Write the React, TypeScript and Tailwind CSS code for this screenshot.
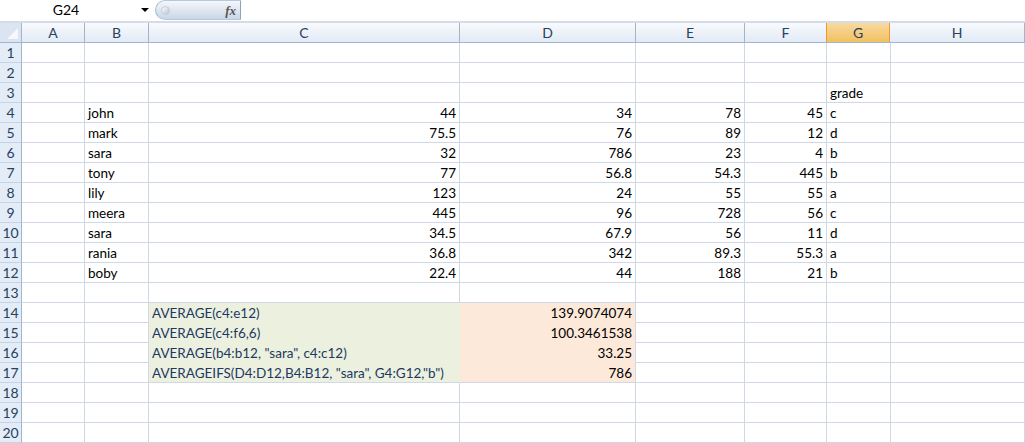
import React from 'react';

// column widths in px: row header, A..H
const COLS = [
  { key: '', w: 'w-[22px]' },
  { key: 'A', w: 'w-[63px]' },
  { key: 'B', w: 'w-[64px]' },
  { key: 'C', w: 'w-[311px]' },
  { key: 'D', w: 'w-[176px]' },
  { key: 'E', w: 'w-[109px]' },
  { key: 'F', w: 'w-[82px]' },
  { key: 'G', w: 'w-[64px]' },
  { key: 'H', w: 'flex-1' },
];

type Cell = string | number | undefined;

// A..H values per row, 1-indexed rows
const DATA: Record<number, Cell[]> = {
  3: [, , , , , , 'grade'],
  4: [, 'john', 44, 34, 78, 45, 'c'],
  5: [, 'mark', 75.5, 76, 89, 12, 'd'],
  6: [, 'sara', 32, 786, 23, 4, 'b'],
  7: [, 'tony', 77, 56.8, 54.3, 445, 'b'],
  8: [, 'lily', 123, 24, 55, 55, 'a'],
  9: [, 'meera', 445, 96, 728, 56, 'c'],
  10: [, 'sara', 34.5, 67.9, 56, 11, 'd'],
  11: [, 'rania', 36.8, 342, 89.3, 55.3, 'a'],
  12: [, 'boby', 22.4, 44, 188, 21, 'b'],
  14: [, , 'AVERAGE(c4:e12)', '139.9074074'],
  15: [, , 'AVERAGE(c4:f6,6)', '100.3461538'],
  16: [, , 'AVERAGE(b4:b12, "sara", c4:c12)', '33.25'],
  17: [, , 'AVERAGEIFS(D4:D12,B4:B12, "sara", G4:G12,"b")', '786'],
};

const isNum = (v: Cell) => typeof v === 'number' || (typeof v === 'string' && /^[\d.]+$/.test(v));

const TopBar = () => (
  <div className="flex h-[23px] bg-white border-b-2 border-[#d5dce6]">
    <div className="w-[152px] relative flex items-center">
      <span className="w-[132px] text-center text-[14px] text-black pb-[2px]">G24</span>
      <span className="absolute left-[141px] top-[8px] w-0 h-0 border-l-[4px] border-r-[4px] border-t-[4px] border-l-transparent border-r-transparent border-t-black" />
    </div>
    <div className="w-[86px] h-[20px] ml-[3px] rounded-l-full border border-l-[#a8b9cf] border-y-[#b7c6d9] border-r-[#8ea2bd] bg-gradient-to-b from-[#f4f7fb] via-[#dfe7f2] to-[#c9d6e8] flex items-center justify-between pl-[5px] pr-[4px]">
      <span className="w-[9px] h-[9px] rounded-full bg-gradient-to-br from-white to-[#b9c3cf] border border-[#c4ccd6]" />
      <span className="font-['Liberation_Serif',serif] italic font-bold text-[13px] text-[#555]">fx</span>
    </div>
    <div className="flex-1" />
  </div>
);

const HeaderRow = () => (
  <div className="flex h-[20px] border-b border-[#9eb6ce]">
    {COLS.map((c, i) => {
      if (i === 0)
        return (
          <div key="corner" className={`${c.w} shrink-0 relative bg-[#dbe5f2] border-r border-[#9eb6ce]`}>
            <svg className="absolute right-[3px] bottom-[3px]" width="11" height="11" viewBox="0 0 11 11">
              <path d="M11 0 L11 11 L0 11 Z" fill="#f5f8fc" />
            </svg>
          </div>
        );
      const sel = c.key === 'G';
      return (
        <div
          key={c.key}
          className={`${c.w} shrink-0 flex items-center justify-center text-[14px] border-r ${
            sel
              ? 'bg-gradient-to-b from-[#f9d99f] to-[#f1c15f] border-[#f29536] text-[#27415f] border-l border-l-[#f29536] -ml-[1px]'
              : 'bg-gradient-to-b from-[#f8fafd] to-[#e2eaf5] border-[#9eb6ce] text-[#27415f]'
          }`}
        >
          {c.key}
        </div>
      );
    })}
  </div>
);

const Row = ({ n }: { n: number }) => {
  const vals = DATA[n] || [];
  return (
    <div className="flex h-[20px]">
      <div className="w-[22px] shrink-0 bg-[#e4ecf7] border-r border-[#9eb6ce] border-b border-b-[#c5d3e5] flex items-center justify-center pt-[1px] text-[14px] text-[#27415f]">
        {n}
      </div>
      {COLS.slice(1).map((c, i) => {
        const v = vals[i];
        const green = c.key === 'C' && n >= 14 && n <= 17;
        const orange = c.key === 'D' && n >= 14 && n <= 17;
        const fill = green
          ? 'bg-[#ebf1de] border-[#ebf1de]'
          : orange
          ? 'bg-[#fde9d9] border-b-[#fde9d9] border-r-[#d0d7e5]'
          : 'bg-white border-[#d0d7e5]';
        const bottomEdge = (green || orange) && n === 17 ? '!border-b-[#d0d7e5]' : '';
        return (
          <div
            key={c.key}
            className={`${c.w} shrink-0 border-r border-b ${fill} ${bottomEdge} flex items-center pt-[3px] overflow-visible whitespace-nowrap text-[13.5px] ${
              isNum(v) ? 'justify-end pr-[3px]' : 'pl-[3px]'
            } ${green ? 'text-[#1f3864]' : 'text-black'}`}
          >
            {v !== undefined ? String(v) : ''}
          </div>
        );
      })}
    </div>
  );
};

export default function App() {
  return (
    <div className="w-[1025px] h-[443px] overflow-hidden bg-white font-['Lato',sans-serif] leading-none">
      <TopBar />
      <HeaderRow />
      {Array.from({ length: 20 }, (_, i) => (
        <Row key={i} n={i + 1} />
      ))}
    </div>
  );
}
